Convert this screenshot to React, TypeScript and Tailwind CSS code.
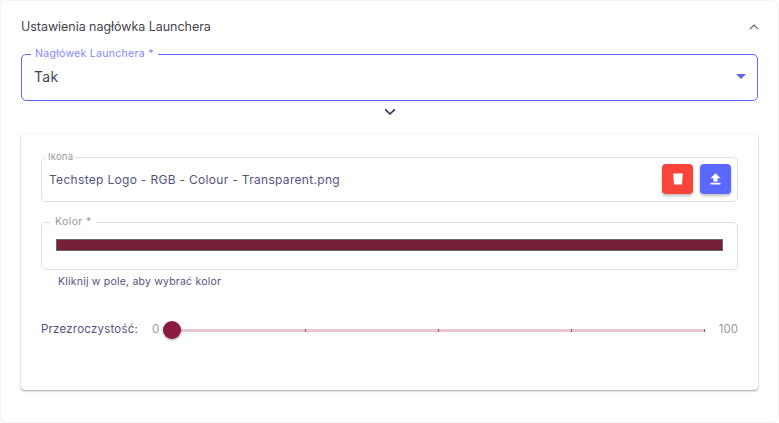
import React from "react";

const font = { fontFamily: '"Inter", "Noto Sans", sans-serif' };

function Ticks() {
  return (
    <div className="relative h-[18px] flex-1 flex items-center">
      <div className="h-[3px] w-full bg-[#e8c6d2] rounded-full" />
      <div className="absolute left-0 right-0 top-[8px] h-[3px] flex justify-between pl-[133px]">
        <span className="w-px h-[3px] bg-[#a04a6a]" />
        <span className="w-px h-[3px] bg-[#a04a6a]" />
        <span className="w-px h-[3px] bg-[#a04a6a]" />
        <span className="w-px h-[3px] bg-[#a04a6a]" />
      </div>
      <div className="absolute left-[-9px] top-0 w-[18px] h-[18px] rounded-full bg-[#8b1a42] shadow-[0_1px_3px_rgba(0,0,0,0.35)]" />
    </div>
  );
}

export default function App() {
  return (
    <div className="w-[779px] h-[423px] overflow-hidden bg-white" style={font}>
      <div className="ml-px mt-px w-[776px] h-[421px] rounded-[5px] bg-white shadow-[0_0_3px_rgba(0,0,0,0.14)] pl-5 pr-[19px] pt-[16px]">
        <div className="flex items-center justify-between h-[20px] pr-px">
          <span className="text-[12.5px] text-[#44444c] tracking-[-0.04px]">Ustawienia nagłówka Launchera</span>
          <svg width="10" height="6" viewBox="0 0 10 6" fill="none" className="mr-[-2px]">
            <path d="M1 5.2 L5 1.2 L9 5.2" stroke="#5f5b7d" strokeWidth="1.2" />
          </svg>
        </div>
        <fieldset className="mt-[11px] h-[53px] border-[1.5px] border-[#5a68ff] rounded-[5px] pl-[9px] pr-[11px] flex items-center justify-between">
          <legend className="ml-0 px-[4px] text-[10.5px] leading-[12px] text-[#7f88ff] tracking-[0.3px]">Nagłówek Launchera *</legend>
          <div className="flex items-center justify-between w-full mt-[-7px]">
            <span className="text-[14px] text-[#44444c] tracking-[0.3px] pl-[3px]">Tak</span>
            <svg width="10" height="5" viewBox="0 0 10 5"><path d="M0 0 H10 L5 5 Z" fill="#5a68ff" /></svg>
          </div>
        </fieldset>
        <div className="flex justify-center h-[33px] pt-[7px]">
          <svg width="12" height="8" viewBox="0 0 12 8" fill="none">
            <path d="M1.2 1.4 L6 6 L10.8 1.4" stroke="#2e2a55" strokeWidth="1.6" />
          </svg>
        </div>
        <div className="h-[256px] rounded-[4px] bg-white shadow-[0_1px_2px_rgba(0,0,0,0.38),0_0_2px_rgba(0,0,0,0.06)] px-5 pt-[18px]">
          <fieldset className="h-[50px] border border-[#e0e0e0] rounded-[5px] pl-[7px] pr-[6px]">
            <legend className="ml-[-3px] px-[2px] text-[9.5px] leading-[10px] text-[#9a9a9a] tracking-[0.2px]">Ikona</legend>
            <div className="flex items-center justify-between h-[32px] mt-[1px]">
              <span className="mt-[2px] text-[12px] text-[#55527f] tracking-[0.31px]">Techstep Logo - RGB - Colour - Transparent.png</span>
              <div className="flex gap-[7px]">
                <div className="w-[31px] h-[30px] rounded-[4px] bg-[#f94439] shadow-[0_2px_3px_rgba(0,0,0,0.25)] flex items-center justify-center">
                  <svg width="10" height="12" viewBox="0 0 10 12"><path d="M0.3 0.5 H9.7 V2 L9 11.5 H1 L0.3 2 Z" fill="#fff" /></svg>
                </div>
                <div className="w-[31px] h-[30px] rounded-[4px] bg-[#5a68ff] shadow-[0_2px_3px_rgba(0,0,0,0.25)] flex items-center justify-center">
                  <svg width="11" height="12" viewBox="0 0 11 12"><path d="M5.5 0.3 L10.5 5.3 H7.5 V8.5 H3.5 V5.3 H0.5 Z M0.5 9.8 H10.5 V11.6 H0.5 Z" fill="#fff" /></svg>
                </div>
              </div>
            </div>
          </fieldset>
          <fieldset className="mt-[14px] h-[54px] border border-[#e0e0e0] rounded-[5px] pl-[14px] pr-[14px]">
            <legend className="ml-[-5px] px-[4px] text-[10.5px] leading-[12px] text-[#9a9a9a] tracking-[0.4px]">Kolor *</legend>
            <div className="mt-[11px] h-[12px] bg-[#752036] border border-[#6b6b6b]" />
          </fieldset>
          <p className="mt-[5px] pl-[17px] text-[10.5px] leading-[14px] text-[#55527f] tracking-[0.21px]">Kliknij w pole, aby wybrać kolor</p>
          <div className="mt-[32px] flex items-center h-[18px]">
            <span className="text-[11.5px] text-[#55527f] tracking-[0.22px] w-[111px]">Przezroczystość:</span>
            <span className="text-[11.5px] text-[#9a9a9a] w-[20px]">0</span>
            <Ticks />
            <span className="text-[11.5px] text-[#9a9a9a] w-[33px] text-right">100</span>
          </div>
        </div>
      </div>
    </div>
  );
}
